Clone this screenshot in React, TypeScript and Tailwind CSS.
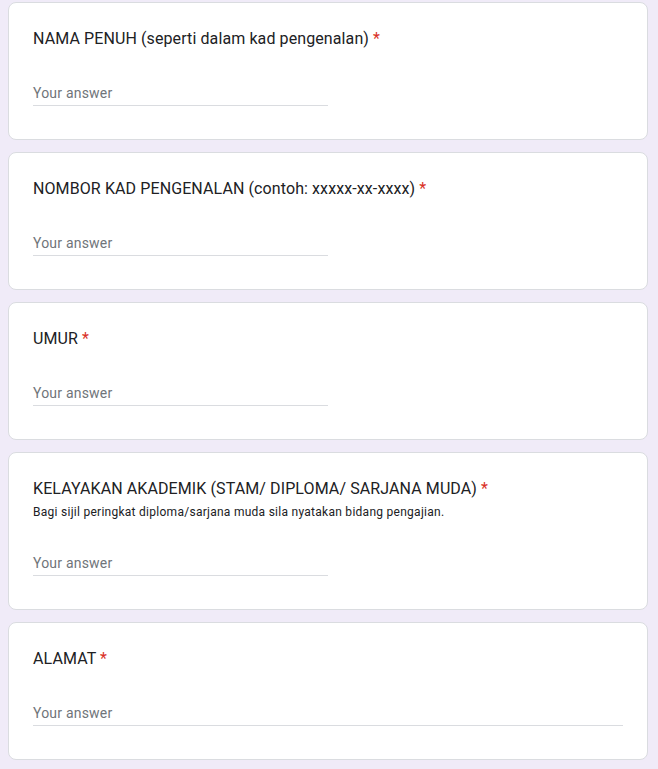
import React from 'react';

type Question = {
  title: string;
  help?: string;
  wide?: boolean;
};

const questions: Question[] = [
  { title: 'NAMA PENUH (seperti dalam kad pengenalan)' },
  { title: 'NOMBOR KAD PENGENALAN (contoh: xxxxx-xx-xxxx)' },
  { title: 'UMUR' },
  {
    title: 'KELAYAKAN AKADEMIK (STAM/ DIPLOMA/ SARJANA MUDA)',
    help: 'Bagi sijil peringkat diploma/sarjana muda sila nyatakan bidang pengajian.',
  },
  { title: 'ALAMAT', wide: true },
];

const QuestionCard: React.FC<{ q: Question }> = ({ q }) => (
  <div className="bg-white border border-[#dadce0] rounded-lg px-6 pt-6 pb-[33px]">
    <div className="text-[16px] leading-6 text-[#202124] font-['Roboto',sans-serif] tracking-[0.1px]">
      {q.title} <span className="text-[#d93025]">*</span>
    </div>
    {q.help && (
      <div className="mt-[2px] text-[12px] leading-[18px] text-[#202124] font-['Roboto',sans-serif] tracking-[0.27px]">
        {q.help}
      </div>
    )}
    <div className={`mt-[30px] border-b border-[#dadce0] ${q.wide ? 'w-full' : 'w-[295px]'}`}>
      <div className="h-6 leading-6 text-[14px] text-[#70757a] font-['Roboto',sans-serif] tracking-[0.2px]">
        Your answer
      </div>
    </div>
  </div>
);

export default function App() {
  return (
    <div className="min-h-screen bg-[#f0ebf8] pt-[2px] px-2 pb-4">
      <div className="w-[640px] flex flex-col gap-3">
        {questions.map((q) => (
          <QuestionCard key={q.title} q={q} />
        ))}
      </div>
    </div>
  );
}
